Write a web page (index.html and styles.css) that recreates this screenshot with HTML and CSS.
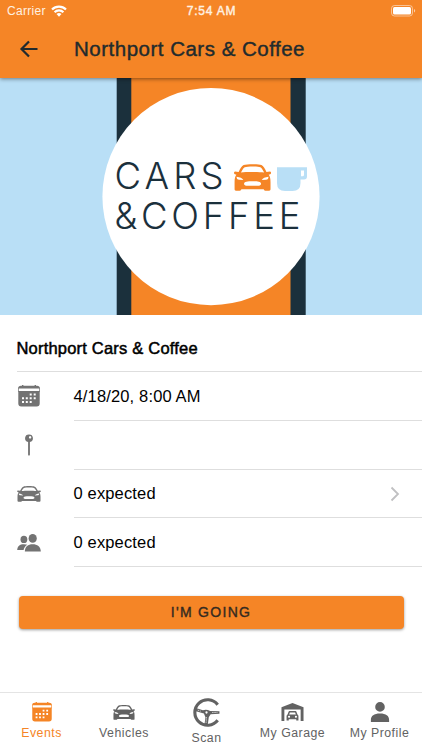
FILE: index.html
```html
<!DOCTYPE html>
<html lang="en">
<head>
    <meta charset="UTF-8">
    <meta name="viewport" content="width=device-width, initial-scale=1.0">
    <title>Northport Cars &amp; Coffee</title>
    <link rel="stylesheet" href="styles.css">
</head>
<body>

<!-- Shared icons -->
<svg class="sprite" width="0" height="0">
    <symbol id="icon-calendar" viewBox="0 0 22 22">
        <path fill="currentColor" d="M4 0h1.400v.8h11.200V0H18v.8h1a3 3 0 0 1 3 2.700H0A3 3 0 0 1 3 .8h1z"/>
        <path fill="currentColor" fill-rule="evenodd" d="M.3 6h21.400v12.500a3 3 0 0 1-3 3H3.300a3 3 0 0 1-3-3zM11.700 8.400v2h2v-2zM15.700 8.400v2h2v-2zM4 12.200v2h2v-2zM7.800 12.200v2h2v-2zM11.700 12.200v2h2v-2zM15.700 12.200v2h2v-2zM4 16v2h2v-2zM7.800 16v2h2v-2zM11.700 16v2h2v-2z"/>
        <path fill="none" stroke="currentColor" stroke-width=".8" d="M.4 3v4M21.600 3v4"/>
    </symbol>
    <symbol id="icon-car" viewBox="0 0 24 17">
        <path fill="currentColor" fill-rule="evenodd" d="M6.300.7C8.300-.1 15.700-.1 17.700.7c1.200.5 2.200 2.300 3.200 4.300l2.300-.2c.8.100.9 1.500.1 1.700l-1 .3c.9 1 1.200 2.500 1.200 4.700v4.300c0 .7-.3 1-.9 1h-2.400c-.6 0-.9-.3-1-.9H4.800c-.1.600-.4.900-1 .9H1.400c-.6 0-.9-.3-.9-1v-4.300c0-2.200.3-3.700 1.200-4.700l-1-.3C-.1 6.300 0 4.900.8 4.800l2.300.2c1-2 2-3.800 3.200-4.300zM7 2C6.100 2.500 5.200 4 4.600 5.400c3.200-.4 11.600-.4 14.800 0C18.800 4 17.900 2.500 17 2c-1.700-.6-8.300-.6-10 0zM1.800 8c0 1.200.5 1.800 1.600 1.900l2.700.2C5.400 8.900 4 8.200 1.800 8zM22.200 8c0 1.200-.5 1.800-1.600 1.900l-2.700.2c.7-1.200 2.100-1.900 4.300-2.100zM8 11.100c-1.900.2-1.900 2.400 0 2.600h8c1.900-.2 1.900-2.400 0-2.600-2-.3-6-.3-8 0z"/>
    </symbol>
</svg>

<header class="header">
    <div class="status-bar">
        <div class="carrier">
            <span>Carrier</span>
            <svg class="wifi" viewBox="0 0 16 12">
                <g fill="none" stroke="currentColor" stroke-width="2.200">
                    <path d="M1 4.500a9.900 9.900 0 0 1 14 0"/>
                    <path d="M3.600 7.200a6.200 6.200 0 0 1 8.800 0"/>
                </g>
                <path fill="currentColor" d="M8 11.700 5.500 9.100a3.600 3.600 0 0 1 5 0z"/>
            </svg>
        </div>
        <div class="time">7:54 AM</div>
        <svg class="battery" viewBox="0 0 25 12">
            <rect x=".5" y=".5" width="21" height="10.500" rx="3" fill="none" stroke="currentColor" opacity=".5"/>
            <rect x="2" y="2" width="18" height="7.500" rx="1.500" fill="currentColor"/>
            <path d="M23 4c1.600.5 1.600 3 0 3.500z" fill="currentColor" opacity=".6"/>
        </svg>
    </div>
    <div class="toolbar">
        <svg class="back" viewBox="0 0 20 18">
            <path d="M10 1.500 2.500 9l7.500 7.500M2.500 9h16" fill="none" stroke="currentColor" stroke-width="2.200"/>
        </svg>
        <h1>Northport Cars &amp; Coffee</h1>
    </div>
</header>

<main class="content">
    <svg class="hero" viewBox="0 0 422 237">
        <rect width="422" height="237" fill="#b9dff6"/>
        <rect x="116.700" width="189" height="237" fill="#1b303c"/>
        <rect x="131.300" width="159.200" height="237" fill="#f58526"/>
        <circle cx="211" cy="118.600" r="108.600" fill="#fff"/>
        <text class="logo-text">
            <tspan x="114.500" y="111.300" textLength="109">CARS</tspan>
            <tspan x="114.500" y="150.600" textLength="186">&amp;COFFEE</tspan>
        </text>
        <svg x="233.800" y="86" width="37.500" height="27" viewBox="0 0 24 17" preserveAspectRatio="none" color="#f58526">
            <use href="#icon-car" width="24" height="17"/>
        </svg>
        <path fill="#b9dff6" fill-rule="evenodd" d="M277 89.300h30v9.200q0 3-3 3h-3.500v3.500q0 8-8 8h-7.500q-8 0-8-8zM301 92.600v5.600h1.500q1.500 0 1.500-1.500v-4.100z"/>
    </svg>

    <h2 class="event-title">Northport Cars &amp; Coffee</h2>

    <ul class="details">
        <li>
            <svg class="icon" viewBox="0 0 22 22"><use href="#icon-calendar" width="22" height="22"/></svg>
            <div class="label">4/18/20, 8:00 AM</div>
        </li>
        <li>
            <svg class="icon" viewBox="0 0 24 24">
                <path fill="currentColor" fill-rule="evenodd" d="M12 .5a4.200 4.200 0 0 1 1 8.300V22.500L12 24l-1-1.500V8.800A4.200 4.200 0 0 1 12 .5zM13.200 2.300a1.300 1.300 0 1 0 .01 0z"/>
            </svg>
            <div class="label"></div>
        </li>
        <li>
            <svg class="icon car" viewBox="0 0 24 17" preserveAspectRatio="none"><use href="#icon-car" width="24" height="17"/></svg>
            <div class="label">0 expected
                <svg class="chevron" viewBox="0 0 10 16"><path d="M1.500 1.500 8 8l-6.500 6.500" fill="none" stroke="currentColor" stroke-width="1.800"/></svg>
            </div>
        </li>
        <li>
            <svg class="icon people" viewBox="0 0 24 18">
                <g fill="currentColor">
                    <ellipse cx="15.700" cy="4.400" rx="4.100" ry="4.300"/>
                    <path d="M7.800 17.500C8 12.400 11 10.300 15.700 10.300s7.900 2.100 8.100 7.200z"/>
                    <ellipse cx="6.900" cy="5.400" rx="3.400" ry="3.600"/>
                    <path d="M.2 16C.4 12 2.700 10.200 6.900 10.200c1.400 0 2.500.2 3.400.6C8 12.200 7 14 6.600 16z"/>
                </g>
            </svg>
            <div class="label">0 expected</div>
        </li>
    </ul>

    <button class="going-btn">I'M GOING</button>
</main>

<nav class="tabs">
    <a class="tab active">
        <svg class="tab-icon" viewBox="0 0 22 22"><use href="#icon-calendar" width="22" height="22"/></svg>
        <span>Events</span>
    </a>
    <a class="tab">
        <svg class="tab-icon tab-car" viewBox="0 0 24 17" preserveAspectRatio="none"><use href="#icon-car" width="24" height="17"/></svg>
        <span>Vehicles</span>
    </a>
    <a class="tab scan">
        <svg class="tab-icon wheel" viewBox="0 0 28 28">
            <path d="M24.800 6.500A12.300 12.300 0 1 0 24.800 21.500" fill="none" stroke="currentColor" stroke-width="3"/>
            <path d="M3 9.500 10.500 11.800q3.500-1.300 7 .7l9 .3v2.400l-8.500.6-1.800 2.700-1 7.500h-3.200l1-7.500-1.500-3.500L3 12.500z" fill="currentColor"/>
            <circle cx="14" cy="14" r="1.100" fill="#fff"/>
            <path d="M14 18.500 13.600 24M19.500 14h5M5.500 11.700l3 1" stroke="#fff" stroke-width=".7" stroke-dasharray="1.300 .8"/>
        </svg>
        <span>Scan</span>
    </a>
    <a class="tab">
        <svg class="tab-icon garage" viewBox="0 0 24 20">
            <path fill="currentColor" d="M12 .5 23.500 5v14.500h-3V7.500h-17v12h-3V5z"/>
            <path fill="currentColor" fill-rule="evenodd" d="M8.800 9h6.400q.6 0 .9.700l1.100 2.800q1 .6 1 1.700v4.600h-2.300v-1.300H8.100v1.300H5.800v-4.600q0-1.100 1-1.700l1.100-2.800q.3-.7.900-.7zM9.300 10.400l-.8 2.100h7l-.8-2.100zM8.400 14a1 1 0 1 0 .01 0zM15.600 14a1 1 0 1 0 .01 0z"/>
        </svg>
        <span>My Garage</span>
    </a>
    <a class="tab">
        <svg class="tab-icon" viewBox="0 0 20 20">
            <path fill="currentColor" d="M10 0a4.800 4.900 0 0 1 0 9.800A4.800 4.900 0 0 1 10 0zM.9 20v-2c0-4.200 3.100-6.500 9.100-6.500s9.100 2.300 9.100 6.500v2z"/>
        </svg>
        <span>My Profile</span>
    </a>
</nav>

</body>
</html>
```
FILE: styles.css
```css
* {
    box-sizing: border-box;
}
body {
    font-family: "Liberation Sans", Arial, sans-serif;
    margin: 0;
    height: 100vh;
    display: flex;
    flex-direction: column;
    background-color: #fff;
    color: #000;
    overflow: hidden;
}
.sprite {
    display: none;
}
.header {
    height: 78px;
    background-color: #f58526;
    box-shadow: 0 1px 4px rgba(0, 0, 0, 0.45);
    z-index: 1;
}
.status-bar {
    display: grid;
    grid-template-columns: 1fr auto 1fr;
    align-items: center;
    height: 22px;
    padding: 0 6px 0 7px;
    color: #fff1e2;
    font-size: 12px;
}
.carrier {
    display: flex;
    align-items: center;
    gap: 5px;
    letter-spacing: 0.3px;
}
.wifi {
    width: 16px;
    height: 12px;
    color: #fff;
}
.time {
    letter-spacing: 0.8px;
    -webkit-text-stroke: 0.4px;
}
.battery {
    width: 25px;
    height: 12px;
    justify-self: end;
    color: #fff;
}
.toolbar {
    display: flex;
    align-items: center;
    height: 54px;
    padding-left: 19px;
    color: #222b2d;
}
.back {
    width: 20px;
    height: 18px;
    margin-right: 35px;
}
h1 {
    margin: 0;
    font-size: 20.5px;
    font-weight: normal;
    letter-spacing: 0.5px;
    -webkit-text-stroke: 0.4px;
}
.content {
    flex: 1;
}
.hero {
    display: block;
    width: 100%;
    height: 237px;
}
.logo-text {
    font-family: Inter, sans-serif;
    font-size: 36.5px;
    font-weight: 300;
    fill: #1b303c;
}
.event-title {
    margin: 0 0 0 16.5px;
    height: 57px;
    padding-top: 9px;
    line-height: 48px;
    border-bottom: 1px solid #dedede;
    font-size: 16.5px;
    font-weight: normal;
    letter-spacing: 0.2px;
    -webkit-text-stroke: 0.5px;
}
.details {
    list-style: none;
    margin: 0;
    padding: 0 0 0 17px;
}
.details li {
    display: flex;
    align-items: center;
    height: 48.8px;
}
.icon {
    width: 24px;
    height: 22px;
    margin-right: 32.5px;
    color: #737373;
}
.icon.car {
    height: 16px;
}
.icon.people {
    height: 18px;
}
.label {
    flex: 1;
    display: flex;
    align-items: center;
    justify-content: space-between;
    height: 100%;
    padding: 1px 22px 0 0;
    border-bottom: 1px solid #dedede;
    font-size: 16.5px;
    letter-spacing: 0.15px;
}
.chevron {
    width: 10px;
    height: 16px;
    color: #c0c0c2;
}
.going-btn {
    display: block;
    width: 385px;
    height: 33px;
    margin: 29px 0 0 18.5px;
    padding: 0 0 1px;
    border: none;
    border-radius: 4px;
    background-color: #f58526;
    box-shadow: 0 1px 3px rgba(0, 0, 0, 0.4);
    color: #352b20;
    font-family: inherit;
    font-size: 14px;
    letter-spacing: 1.3px;
    -webkit-text-stroke: 0.4px;
}
.tabs {
    display: grid;
    grid-template-columns: 83px 82px 83px 89px 85px;
    height: 58px;
    border-top: 1px solid #e4e4e4;
    background-color: #fff;
}
.tab {
    display: flex;
    flex-direction: column;
    align-items: center;
    justify-content: space-between;
    padding: 9px 0 9px;
    color: #626262;
    font-size: 12.3px;
    line-height: 15px;
    letter-spacing: 0.5px;
    white-space: nowrap;
}
.tab.active {
    color: #f58526;
}
.tab-icon {
    width: 20px;
    height: 20px;
}
.tab-icon.tab-car {
    width: 22px;
    height: 15px;
    margin-top: 3px;
}
.tab-icon.garage {
    width: 23px;
}
.tab.scan {
    padding: 5px 0 4px;
}
.tab-icon.wheel {
    width: 29px;
    height: 29px;
}
```
